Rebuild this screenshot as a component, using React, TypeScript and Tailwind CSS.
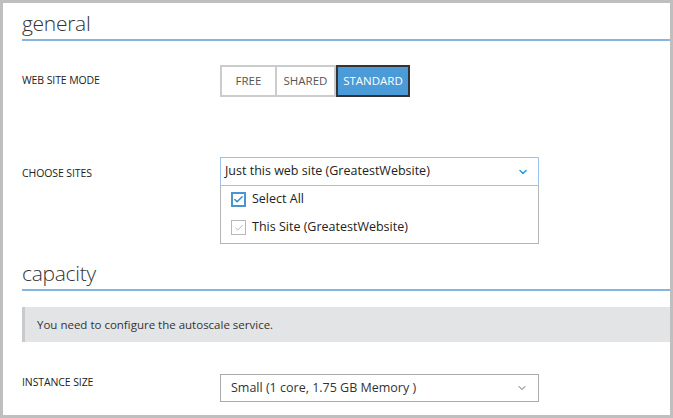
import { Check, ChevronDown } from 'lucide-react'

const font = { fontFamily: '"Open Sans", "Noto Sans", sans-serif' }

function SectionHeading({ title }: { title: string }) {
  return (
    <div className="border-b-2 border-[#86b5e0] h-[38px] flex items-end pb-[5px]">
      <h2 className="text-[21px] font-light text-[#333] leading-none tracking-[-0.3px]">{title}</h2>
    </div>
  )
}

function Label({ text }: { text: string }) {
  return <div className="w-[198px] shrink-0 text-[10.5px] font-medium text-[#222] tracking-[-0.1px]">{text}</div>
}

export default function App() {
  return (
    <div style={font} className="w-[673px] h-[418px] border-[3px] border-[#bfbfbf] bg-white overflow-hidden">
      <div className="pl-[19px]">
        <SectionHeading title="general" />

        {/* Web site mode */}
        <div className="flex items-center mt-[24px]">
          <Label text="WEB SITE MODE" />
          <div className="flex h-[32px] text-[11.5px]">
            <button className="w-[57px] border-2 border-[#cccccc] bg-white text-[#555]">FREE</button>
            <button className="w-[59px] border-2 border-l-0 border-[#cccccc] bg-white text-[#555]">SHARED</button>
            <button className="w-[74px] border-2 border-[#333] bg-[#4a9bd7] text-white">STANDARD</button>
          </div>
        </div>

        {/* Choose sites */}
        <div className="flex items-start mt-[60px]">
          <div className="h-[34px] flex items-center"><Label text="CHOOSE SITES" /></div>
          <div className="w-[319px] shrink-0">
            <div className="h-[29px] border border-[#9cc3ec] flex items-center justify-between pl-[4px] pr-[9px] text-[12.5px] text-[#222]">
              <span>Just this web site (GreatestWebsite)</span>
              <ChevronDown className="w-[12px] h-[12px] text-[#2a9ae0]" strokeWidth={3} />
            </div>
            <div className="h-[58px] border border-t-0 border-[#b5b5b5] flex flex-col justify-center gap-[13px] pl-[10px] pb-[2px] text-[12.5px] text-[#222]">
              <div className="flex items-center gap-[6px] leading-none">
                <span className="w-[15px] h-[15px] border-2 border-[#4a95cf] flex items-center justify-center">
                  <Check className="w-[11px] h-[11px] text-[#2f86c8]" strokeWidth={3} />
                </span>
                Select All
              </div>
              <div className="flex items-center gap-[6px] leading-none">
                <span className="w-[15px] h-[15px] border border-[#b8b8b8] flex items-center justify-center">
                  <Check className="w-[10px] h-[10px] text-[#a8a8a8]" strokeWidth={2} />
                </span>
                This Site (GreatestWebsite)
              </div>
            </div>
          </div>
        </div>

        <div className="mt-[9px]">
          <SectionHeading title="capacity" />
        </div>

        {/* Notice */}
        <div className="mt-[16px] h-[35px] bg-[#e3e4e5] border-l-[3px] border-[#c9cacb] flex items-center pl-[12px] text-[11.5px] text-[#333]">
          You need to configure the autoscale service.
        </div>

        {/* Instance size */}
        <div className="flex items-start mt-[32px]">
          <div className="pt-[1px]"><Label text="INSTANCE SIZE" /></div>
          <div className="w-[319px] shrink-0 h-[28px] border border-[#ababab] flex items-center justify-between pl-[10px] pr-[10px] text-[12.5px] text-[#333]">
            <span>Small (1 core, 1.75 GB Memory )</span>
            <ChevronDown className="w-[12px] h-[12px] text-[#666]" strokeWidth={2} />
          </div>
        </div>
      </div>
    </div>
  )
}
